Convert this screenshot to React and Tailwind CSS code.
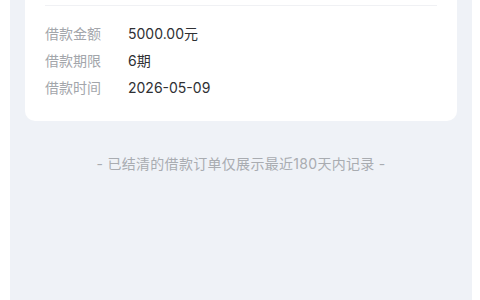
const rows = [
	{ label: '借款金额', value: '5000.00元' },
	{ label: '借款期限', value: '6期' },
	{ label: '借款时间', value: '2026-05-09' }
];

const App = () => {
	return (
		<div
			className="w-[480px] h-[300px] overflow-hidden bg-white pl-[10px] pr-[8px]"
			style={{ fontFamily: 'Inter, "Noto Sans CJK SC", sans-serif' }}
		>
			<div className="h-full bg-[#eff2f7] px-[15px]">
				<div className="bg-white rounded-b-[10px] px-5 pb-[20px]">
					<div className="h-[6px] border-b border-[#f0f1f4]" />
					<div className="pt-[14px]">
						{rows.map((row) => (
							<div key={row.label} className="flex items-center h-[27px] text-[14px]">
								<span className="w-[83px] text-[#a3a6ab]">{row.label}</span>
								<span className="text-[#2f3033]">{row.value}</span>
							</div>
						))}
					</div>
				</div>
				<p className="mt-[32px] text-center text-[14px] tracking-[0.3px] text-[#a9acb1]">
					- 已结清的借款订单仅展示最近180天内记录 -
				</p>
			</div>
		</div>
	);
};

export default App;
